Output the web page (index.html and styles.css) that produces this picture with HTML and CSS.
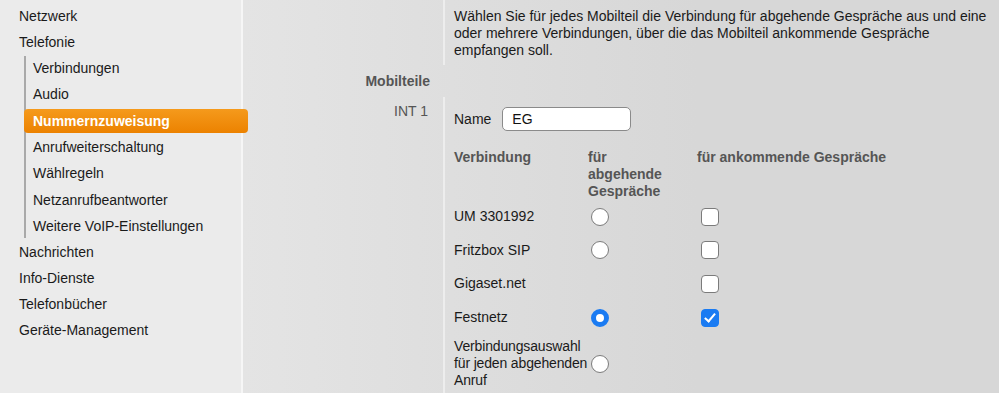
FILE: index.html
```html
<!DOCTYPE html>
<html>
<head>
    <title>Nummernzuweisung</title>
    <link rel="stylesheet" href="styles.css">
</head>
<body>
    <div class="page">
        <ul class="nav">
            <li class="nav-item">Netzwerk</li>
            <li class="nav-item">Telefonie
                <ul class="sub-nav">
                    <li class="nav-item">Verbindungen</li>
                    <li class="nav-item">Audio</li>
                    <li class="nav-item active">Nummernzuweisung</li>
                    <li class="nav-item">Anrufweiterschaltung</li>
                    <li class="nav-item">Wählregeln</li>
                    <li class="nav-item">Netzanrufbeantworter</li>
                    <li class="nav-item">Weitere VoIP-Einstellungen</li>
                </ul>
            </li>
            <li class="nav-item">Nachrichten</li>
            <li class="nav-item">Info-Dienste</li>
            <li class="nav-item">Telefonbücher</li>
            <li class="nav-item">Geräte-Management</li>
        </ul>

        <div class="main">
            <div class="label-cell"></div>
            <div class="content-cell intro">
                Wählen Sie für jedes Mobilteil die Verbindung für abgehende Gespräche aus und eine oder mehrere Verbindungen, über die das Mobilteil ankommende Gespräche empfangen soll.
            </div>

            <div class="section-title">Mobilteile</div>
            <div></div>

            <div class="label-cell handset-label">INT 1</div>
            <div class="content-cell handset">
                <div class="name-row">
                    <label for="name1">Name</label>
                    <input type="text" id="name1" class="name-input" value="EG">
                </div>

                <div class="conn-table">
                    <div class="th">Verbindung</div>
                    <div class="th th-narrow">für abgehende Gespräche</div>
                    <div class="th">für ankommende Gespräche</div>

                    <div class="td-text">UM 3301992</div>
                    <div class="td-ctrl"><input type="radio" name="out1" class="radio"></div>
                    <div class="td-ctrl"><input type="checkbox" class="check"></div>

                    <div class="td-text">Fritzbox SIP</div>
                    <div class="td-ctrl"><input type="radio" name="out1" class="radio"></div>
                    <div class="td-ctrl"><input type="checkbox" class="check"></div>

                    <div class="td-text">Gigaset.net</div>
                    <div class="td-ctrl"></div>
                    <div class="td-ctrl"><input type="checkbox" class="check"></div>

                    <div class="td-text">Festnetz</div>
                    <div class="td-ctrl"><input type="radio" name="out1" class="radio" checked></div>
                    <div class="td-ctrl"><input type="checkbox" class="check" checked></div>

                    <div class="td-text tight">Verbindungsauswahl für jeden abgehenden Anruf</div>
                    <div class="td-ctrl"><input type="radio" name="out1" class="radio"></div>
                    <div class="td-ctrl"></div>
                </div>
            </div>
        </div>
    </div>
</body>
</html>
```

FILE: styles.css
```css
body {
    margin: 0;
    font-family: "Liberation Sans", Arial, sans-serif;
    font-size: 14px;
    color: #1a1a1a;
    background: #d8d8d8;
}

.page {
    display: flex;
    height: 393px;
    overflow: hidden;
}

/* left navigation */
.nav {
    list-style: none;
    margin: 0;
    padding: 4px 0 0 0;
    width: 241px;
    flex: none;
    background: #ebebeb;
    border-right: 2px solid #f6f6f6;
    position: relative;
    z-index: 1;
}

.nav-item {
    line-height: 24px;
    margin-bottom: 2px;
    padding-left: 19px;
}

.sub-nav {
    list-style: none;
    margin: 2px 0 0 5px;
    padding: 0;
    border-left: 2px solid #a9a9a9;
}

.sub-nav .nav-item {
    padding-left: 7px;
    margin-bottom: 2.33px;
}

.sub-nav .nav-item.active {
    margin-left: -2px;
    margin-right: -7px;
    padding-left: 9px;
    border-radius: 4px;
    background: linear-gradient(to bottom, #f59a1c, #ec8200);
    color: #ffffff;
    font-weight: bold;
}

/* main form area */
.main {
    flex: 1;
    display: grid;
    grid-template-columns: 202px 1fr;
    grid-template-rows: auto 32px 1fr;
    background: linear-gradient(to right, #e4e4e4, #d7d7d7 60%);
}

.label-cell {
    border-right: 2px solid #ededed;
    text-align: right;
    padding-right: 14px;
    color: #555555;
}

.content-cell {
    padding-left: 9px;
    padding-right: 10px;
}

.intro {
    line-height: 17px;
    padding-top: 8px;
    padding-bottom: 6px;
}

.section-title {
    text-align: right;
    padding-right: 15px;
    line-height: 32px;
    font-weight: bold;
    color: #555555;
}

.handset-label {
    padding-top: 6px;
    padding-right: 15px;
    line-height: 17px;
}

.handset {
    padding-top: 10px;
}

.name-row {
    display: flex;
    align-items: center;
    gap: 11px;
}

.name-input {
    width: 129px;
    height: 24px;
    box-sizing: border-box;
    border: 1px solid #8a8a8a;
    border-radius: 5px;
    padding: 0 9px;
    font: inherit;
    color: #111111;
    background: #ffffff;
}

.conn-table {
    display: grid;
    grid-template-columns: 136px 107px 1fr;
    align-items: center;
    margin-top: 18px;
    line-height: 17px;
}

.th {
    align-self: start;
    font-weight: bold;
    color: #555555;
}

.th-narrow {
    margin-left: -2px;
    padding-right: 21px;
}

.td-text {
    padding: 4px 0;
}

.td-text.tight {
    letter-spacing: -0.15px;
}

.td-ctrl {
    padding: 7.8px 0;
    height: 18px;
}

.radio,
.check {
    appearance: none;
    -webkit-appearance: none;
    width: 18px;
    height: 18px;
    margin: 0 0 0 1px;
    box-sizing: border-box;
    border: 1.5px solid #7b7b7b;
    background: #ffffff;
    display: block;
    position: relative;
}

.radio {
    border-radius: 50%;
}

.radio:checked {
    border: 5.5px solid #1a7bf2;
}

.check {
    border-radius: 4px;
    margin-left: 4px;
}

.check:checked {
    background: #1a7bf2;
    border-color: #1a7bf2;
}

.check:checked::after {
    content: "";
    position: absolute;
    left: 5px;
    top: 1px;
    width: 4px;
    height: 9px;
    border: solid #ffffff;
    border-width: 0 2px 2px 0;
    transform: rotate(40deg);
}
```
